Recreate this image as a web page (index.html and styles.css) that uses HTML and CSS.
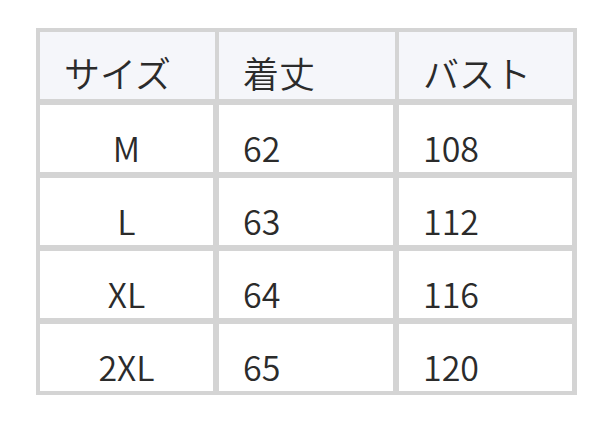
FILE: index.html
```html
<!DOCTYPE html>
<html lang="ja">
<head>
<meta charset="utf-8">
<link rel="stylesheet" href="styles.css">
</head>
<body>
<div class="size-table">
  <div class="cell head">サイズ</div>
  <div class="cell head">着丈</div>
  <div class="cell head">バスト</div>

  <div class="cell body center">M</div>
  <div class="cell body">62</div>
  <div class="cell body last">108</div>

  <div class="cell body center">L</div>
  <div class="cell body">63</div>
  <div class="cell body last">112</div>

  <div class="cell body center">XL</div>
  <div class="cell body">64</div>
  <div class="cell body last">116</div>

  <div class="cell body center">2XL</div>
  <div class="cell body">65</div>
  <div class="cell body last">120</div>
</div>
</body>
</html>
```

FILE: styles.css
```css
html, body {
  margin: 0;
  padding: 0;
  background: #ffffff;
}

body {
  font-family: "Noto Sans CJK JP", "Noto Sans", sans-serif;
  color: #2b2b2b;
}

.size-table {
  margin: 28px 0 0 36px;
  width: 541px;
  box-sizing: border-box;
  padding: 4px;
  background: #d4d4d4;
  display: grid;
  grid-template-columns: 175px 176px 174px;
  grid-auto-rows: 67px;
  column-gap: 4px;
  row-gap: 6px;
}

.cell {
  display: flex;
  align-items: flex-end;
  padding: 0 24px;
  font-size: 34px;
  font-weight: 350;
  line-height: 49px;
  white-space: nowrap;
}

.head {
  background: #f5f6fa;
  font-size: 36px;
  padding-bottom: 2px;
}

.body {
  background: #ffffff;
  border-right: 2px solid #d4d4d4;
}

.body.last {
  border-right-width: 1px;
}

.center {
  justify-content: center;
}
```
